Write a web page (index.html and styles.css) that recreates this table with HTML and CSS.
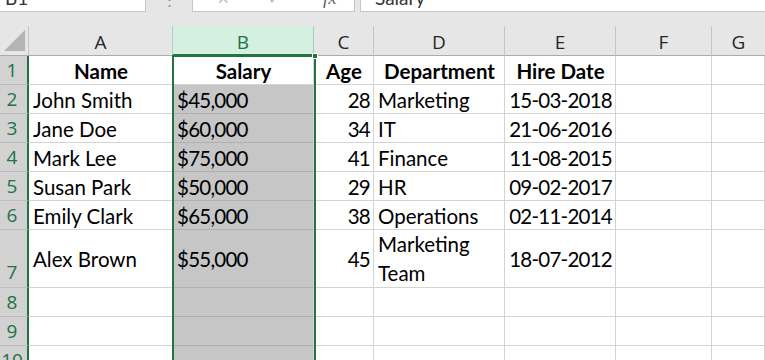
FILE: index.html
```html
<!DOCTYPE html>
<html>
<head>
<meta charset="utf-8">
<link rel="stylesheet" href="styles.css">
</head>
<body>
<div class="app">
  <div class="fbar">
    <div class="namebox"><span class="cut">B1</span></div>
    <div class="dots"><span class="cut">⋮</span></div>
    <div class="btnbox">
      <span class="cut x">✕</span>
      <span class="cut x">✓</span>
      <span class="cut fx">fx</span>
    </div>
    <div class="formula"><span class="cut">Salary</span></div>
  </div>
  <div class="sheet">
    <div class="corner"><svg width="21" height="21" viewBox="0 0 21 21"><polygon points="21,0 21,21 0,21" fill="#b4b4b4"/></svg></div>
    <div class="ch">A</div>
    <div class="ch sel">B</div>
    <div class="ch">C</div>
    <div class="ch">D</div>
    <div class="ch">E</div>
    <div class="ch">F</div>
    <div class="ch last">G</div>

    <div class="rh">1</div>
    <div class="c b center">Name</div>
    <div class="c b center active">Salary</div>
    <div class="c b center">Age</div>
    <div class="c b center">Department</div>
    <div class="c b center">Hire Date</div>
    <div class="c"></div>
    <div class="c"></div>

    <div class="rh">2</div>
    <div class="c">John Smith</div>
    <div class="c s n">$45,000</div>
    <div class="c r n">28</div>
    <div class="c">Marketing</div>
    <div class="c r n">15-03-2018</div>
    <div class="c"></div>
    <div class="c"></div>

    <div class="rh">3</div>
    <div class="c">Jane Doe</div>
    <div class="c s n">$60,000</div>
    <div class="c r n">34</div>
    <div class="c">IT</div>
    <div class="c r n">21-06-2016</div>
    <div class="c"></div>
    <div class="c"></div>

    <div class="rh">4</div>
    <div class="c">Mark Lee</div>
    <div class="c s n">$75,000</div>
    <div class="c r n">41</div>
    <div class="c">Finance</div>
    <div class="c r n">11-08-2015</div>
    <div class="c"></div>
    <div class="c"></div>

    <div class="rh">5</div>
    <div class="c">Susan Park</div>
    <div class="c s n">$50,000</div>
    <div class="c r n">29</div>
    <div class="c">HR</div>
    <div class="c r n">09-02-2017</div>
    <div class="c"></div>
    <div class="c"></div>

    <div class="rh">6</div>
    <div class="c">Emily Clark</div>
    <div class="c s n">$65,000</div>
    <div class="c r n">38</div>
    <div class="c">Operations</div>
    <div class="c r n">02-11-2014</div>
    <div class="c"></div>
    <div class="c"></div>

    <div class="rh tall">7</div>
    <div class="c">Alex Brown</div>
    <div class="c s n">$55,000</div>
    <div class="c r n">45</div>
    <div class="c wrap">Marketing<br>Team</div>
    <div class="c r n">18-07-2012</div>
    <div class="c"></div>
    <div class="c"></div>

    <div class="rh">8</div>
    <div class="c"></div><div class="c s"></div><div class="c"></div><div class="c"></div><div class="c"></div><div class="c"></div><div class="c"></div>

    <div class="rh">9</div>
    <div class="c"></div><div class="c s"></div><div class="c"></div><div class="c"></div><div class="c"></div><div class="c"></div><div class="c"></div>

    <div class="rh">10</div>
    <div class="c"></div><div class="c s"></div><div class="c"></div><div class="c"></div><div class="c"></div><div class="c"></div><div class="c"></div>

    <div class="selbox"><span class="handle"></span></div>
  </div>
</div>
</body>
</html>
```
FILE: styles.css
```css
* { box-sizing: border-box; }
html, body { margin: 0; padding: 0; }
body {
  width: 765px;
  height: 360px;
  overflow: hidden;
  background: #e6e6e6;
  font-family: Lato, "Noto Sans", sans-serif;
}
.app { display: flex; flex-direction: column; }

.fbar {
  display: flex;
  height: 12px;
  overflow: hidden;
  align-items: flex-end;
  margin-bottom: 14px;
}
.fbar > div {
  height: 12px;
  display: flex;
  align-items: flex-end;
  overflow: hidden;
}
.cut {
  display: block;
  font-size: 19px;
  line-height: 20px;
  margin-bottom: 3px;
  color: #333;
}
.namebox {
  width: 146px;
  background: #fff;
  border-right: 1px solid #c6c6c6;
  border-bottom: 1px solid #c6c6c6;
  padding-left: 5px;
}
.dots { width: 46px; justify-content: center; }
.dots .cut { color: #999; }
.btnbox {
  width: 163px;
  background: #fff;
  border: 1px solid #c6c6c6;
  border-top: none;
  gap: 38px;
  padding-left: 24px;
}
.btnbox .x { color: #bbb; font-size: 15px; }
.btnbox .fx { color: #666; font-style: italic; font-family: "Liberation Serif", serif; margin-left: 4px; }
.formula {
  flex: 1;
  margin-left: 5px;
  background: #fff;
  border-left: 1px solid #c6c6c6;
  border-bottom: 1px solid #c6c6c6;
  padding-left: 14px;
}

.sheet {
  display: grid;
  grid-template-columns: 29px 144px 141px 60px 131px 111px 96px 53px;
  grid-template-rows: 30px repeat(6, 29px) 58px repeat(3, 29px);
  background: #fff;
  position: relative;
}
.corner {
  background: #e6e6e6;
  border-bottom: 1px solid #ababab;
  border-right: 1px solid #c6c6c6;
  display: flex;
  align-items: flex-end;
  justify-content: flex-end;
  padding: 0 3px 4px 0;
}
.ch {
  background: #e6e6e6;
  border-bottom: 1px solid #ababab;
  border-right: 1px solid #c6c6c6;
  display: flex;
  align-items: center;
  justify-content: center;
  font-family: "Open Sans", sans-serif;
  font-size: 19px;
  color: #262626;
  padding-top: 3px;
}
.ch.last { border-right: none; }
.ch.sel {
  background: #d3f0e0;
  color: #217346;
  border-bottom: 2px solid #217346;
  border-right-color: #9fd5b7;
}
.rh {
  background: #d2d2d2;
  border-bottom: 1px solid #bdbdbd;
  border-right: 2px solid #217346;
  display: flex;
  align-items: center;
  justify-content: center;
  padding-right: 3px;
  font-family: "Open Sans", sans-serif;
  font-size: 19px;
  color: #217346;
}
.rh.tall { align-items: flex-end; padding-bottom: 2px; }
.c {
  background: #fff;
  border-right: 1px solid #d4d4d4;
  border-bottom: 1px solid #d4d4d4;
  display: flex;
  align-items: center;
  padding: 1px 3px 0 4px;
  font-size: 20.5px;
  color: #000;
  white-space: nowrap;
}
.c.n { letter-spacing: -0.75px; }
.c.b { font-weight: bold; }
.c.center { justify-content: center; }
.c.r { justify-content: flex-end; }
.c.s { background: #c6c6c6; border-bottom-color: #b0b0b0; }
.c.active { background: #fff; }
.c.wrap { line-height: 29px; }

.selbox {
  position: absolute;
  left: 172px;
  top: 29px;
  width: 144px;
  bottom: 0;
  border: 2px solid #217346;
  border-bottom: none;
  pointer-events: none;
}
.handle {
  position: absolute;
  right: -4px;
  top: -4px;
  width: 6px;
  height: 6px;
  background: #217346;
  border: 1px solid #fff;
}
```
